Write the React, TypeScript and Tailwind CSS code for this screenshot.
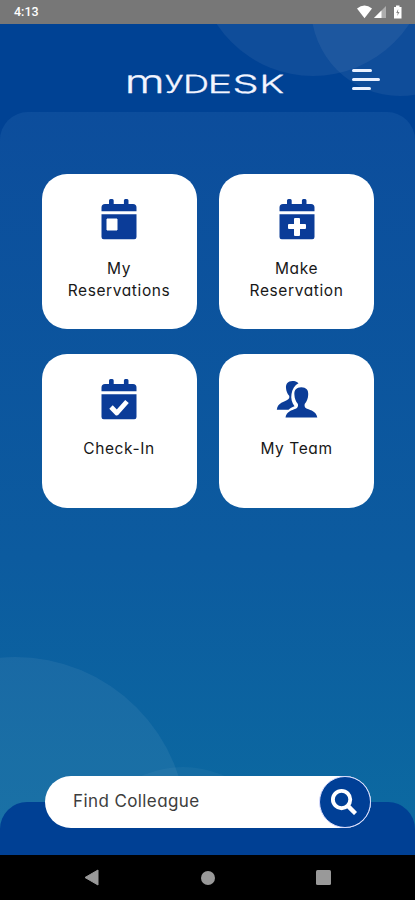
import type { ReactNode } from "react";

function Calendar({ children }: { children: ReactNode }) {
  return (
    <svg className="h-[41px] w-9" viewBox="0 0 36 41" fill="#0b3c98">
      <path d="M8 5V1.500Q8 0 9.500 0h1.800q1.400 0 1.400 1.500V5h10.200V1.500Q22.900 0 24.300 0h1.800q1.400 0 1.400 1.500V5H32q3.500 0 3.500 3.500V12.300H.5V8.500Q.5 5 4 5Z" />
      <path d="M.5 15.200h35v22.800q0 2.200-2.200 2.200H2.700Q.5 40.200.5 38Z" />
      {children}
    </svg>
  );
}

function TeamIcon() {
  return (
    <svg className="h-[41px] w-[42px]" viewBox="0 0 42 41" fill="#0b3c98">
      <path d="M22.500 4.200C21 2.600 18.800 2 16.500 2c-4.800 0-6.800 3-6.500 7 .2 3.300 1.300 5.700 3.200 7.800.5 1.900-.2 3.100-1.700 4C8.500 22.900 1.800 23.500.8 30.700h11.700c1.500-1.600 3.600-2.500 6-3.500-2.600-3.500-3.800-7.700-3-12.200.8-4.900 3.200-8.800 7-10.800Z" />
      <path d="M25.300 8.300c4.900 0 7.300 2.900 6.900 7.400-.2 3.700-1.300 6.600-3.500 9.200-.5 2.300.2 3.900 2.300 4.800 4 1.700 9.300 2.500 10.300 8.800H9.500c1-6.300 6.200-7.100 10.200-8.800 2-1 2.700-2.600 2.200-4.800-2.200-2.600-3.300-5.500-3.500-9.200-.4-4.500 2-7.400 6.900-7.400Z" />
    </svg>
  );
}

function Card({ icon, children }: { icon: ReactNode; children: ReactNode }) {
  return (
    <button className="flex h-[154.500px] flex-col items-center rounded-[25px] bg-white pt-[25px] text-[15.500px] leading-[22px] tracking-[0.6px] text-[#181818]">
      {icon}
      <span className="mt-[18px]">{children}</span>
    </button>
  );
}

function Logo() {
  return (
    <svg className="-my-3 h-12 w-[162px] overflow-visible" viewBox="0 -12 162 48" fill="#f3f5ff" stroke="#f3f5ff" strokeWidth="0.3" fontFamily="Inter, sans-serif" fontWeight="300" fontSize="25" textRendering="geometricPrecision">
      <text transform="translate(-2.300 21) scale(1.430 1)" fontSize="32">m</text>
      <text transform="translate(37.500 15.800) scale(1.450 1)" fontSize="24">y</text>
      <text transform="translate(56 21) scale(1.450 1)">D</text>
      <text transform="translate(80.500 21) scale(1.650 1)">E</text>
      <text transform="translate(105.500 21) scale(1.650 1)">S</text>
      <text transform="translate(132.500 21) scale(1.520 1)">K</text>
    </svg>
  );
}

export default function App() {
  return (
    <div className="relative flex h-[900px] w-[415px] flex-col overflow-hidden bg-[#004294] font-['Inter','Noto_Sans',sans-serif] [font-feature-settings:'cv11']">
      <div className="relative z-10 flex h-[23.500px] shrink-0 items-center justify-between bg-[#777] pl-3.5 pr-[13px] text-white">
        <span className="pt-px font-['Roboto',sans-serif] text-[12.500px] font-medium">4:13</span>
        <svg className="h-4 w-[46px]" viewBox="0 0 46 16" fill="white">
          <path d="M1 4.500Q8.500-1.500 16 4.500L8.500 14.200Z" />
          <path d="M30 2v12H18Z" opacity=".4" />
          <path d="M25.500 6.500V14H18Z" />
          <path d="M38 3h2V1.500h3.500V3h2v11.500H38Z" />
          <path d="M42.200 5l-2 4h1.500l-.4 3 2.200-4H42Z" fill="#888" />
        </svg>
      </div>
      <div className="absolute left-[198px] top-[-154px] size-[230px] rounded-full bg-white/6" />
      <div className="absolute left-[311px] top-[-82px] size-[178px] rounded-full bg-white/6" />
      <header className="relative flex h-[88.500px] shrink-0 items-start justify-between pl-[127px] pr-[35px]">
        <div className="pt-[48.500px]"><Logo /></div>
        <button aria-label="Menu" className="flex flex-col gap-[6px] pt-[45.500px]">
          <span className="h-[3px] w-5 rounded-sm bg-[#eaf1ff]" />
          <span className="h-[3px] w-7 rounded-sm bg-[#eaf1ff]" />
          <span className="h-[3px] w-[19px] rounded-sm bg-[#eaf1ff]" />
        </button>
      </header>
      <main className="relative flex grow flex-col justify-between overflow-hidden rounded-t-[28px] bg-linear-to-b from-[#0c4d9c] via-[#0c5b9f] via-60% to-[#0c6ba1]">
        <div className="absolute left-[-157px] top-[545px] size-[344px] rounded-full bg-white/6" />
        <div className="absolute left-[83px] top-[655px] size-[200px] rounded-full bg-white/4" />
        <div className="relative grid grid-cols-[155px_155px] gap-x-[22.500px] gap-y-[25px] pl-[41.500px] pt-[62px]">
          <Card icon={<Calendar><path d="M6 20h10v11H6Z" fill="white" stroke="white" strokeLinejoin="round" /></Calendar>}>My<br />Reservations</Card>
          <Card icon={<Calendar><path d="M16 19h4q1 0 1 1v5h5q1 0 1 1v3q0 1-1 1h-5v6q0 1-1 1h-4q-1 0-1-1v-6h-5q-1 0-1-1v-3q0-1 1-1h5v-5q0-1 1-1Z" fill="white" /></Calendar>}>Make<br />Reservation</Card>
          <Card icon={<Calendar><path d="M10 28l5.800 6L26 22.500" fill="none" stroke="white" strokeWidth="4.800" strokeLinejoin="round" /></Calendar>}>Check-In</Card>
          <Card icon={<TeamIcon />}>My Team</Card>
        </div>
        <footer className="relative h-[53.500px] rounded-t-[27px] bg-[#004094] pl-[45px] pr-11">
          <div className="relative -top-[26px] flex h-[52px] items-center justify-between rounded-full bg-white pl-[28px] text-[17px] tracking-[0.4px] text-[#3d3d3d]">
            <span>Find Colleague</span>
            <button aria-label="Search" className="flex size-[52px] items-center justify-center rounded-full border-[1.500px] border-[#d9dcff] bg-[#003f96]">
              <svg className="-ml-[3px] size-[27px]" viewBox="0 0 28 28" fill="none" stroke="white" strokeWidth="4">
                <circle cx="12" cy="12" r="9" />
                <path d="M18 18l8.500 8.500" strokeWidth="4.500" />
              </svg>
            </button>
          </div>
        </footer>
      </main>
      <nav className="flex h-[45px] shrink-0 items-center justify-between bg-black pl-[84px] pr-[84px]">
        <svg className="h-[17px] w-[15px]" viewBox="0 0 15 17" fill="#999"><path d="M14 1v15L1 8.500Z" stroke="#999" strokeLinejoin="round" /></svg>
        <span className="size-[14px] rounded-full bg-[#999]" />
        <span className="size-[15px] rounded-[1.500px] bg-[#999]" />
      </nav>
    </div>
  );
}
